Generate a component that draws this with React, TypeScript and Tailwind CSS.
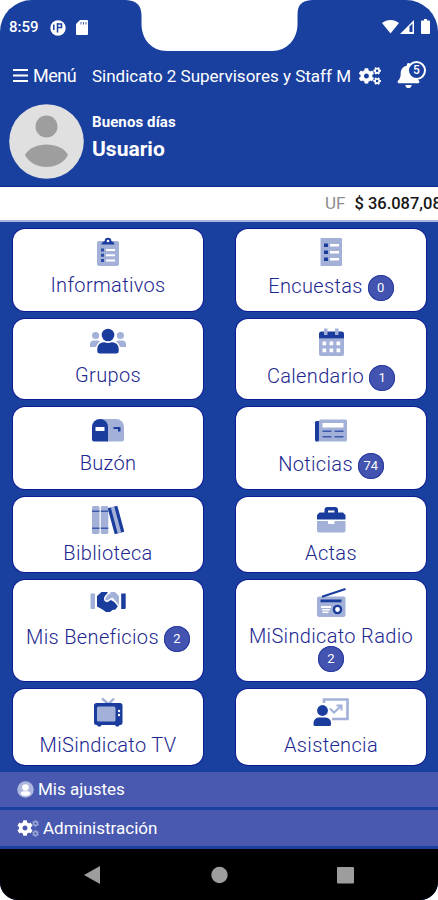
import type { ReactNode } from 'react'
import { FaBell, FaCog, FaCogs } from 'react-icons/fa'

const DARK = '#1a3c9c'
const SOFT = '#a3b1d9'

function ClipboardIcon() {
  return (
    <>
      <path fill={SOFT} d="M9 4h18a2 2 0 0 1 2 2v21a2 2 0 0 1-2 2H9a2 2 0 0 1-2-2V6a2 2 0 0 1 2-2z" />
      <path fill={DARK} d="M11.500 7.500c0-2 1.500-2.500 3.200-3.500a3.300 3.300 0 0 1 6.600 0c1.700 1 3.200 1.500 3.200 3.500z" />
      <circle cx="18" cy="4" r="1.300" fill="#fff" />
      <path fill={DARK} d="M11 11.500h3v3h-3zM11 16.800h3v3h-3zM11 22h3v3h-3z" opacity=".85" />
      <path fill="#fff" d="M16 12h9v2h-9zM16 17.300h9v2h-9zM16 22.500h9v2h-9z" />
    </>
  )
}

function SurveyIcon() {
  return (
    <>
      <rect x="7.500" y="1" width="21.500" height="28" rx="1" fill={SOFT} />
      <path fill={DARK} d="M11 6.500h4v3.500h-4zM11 13.500h4V17h-4zM11 20.500h4V24h-4z" />
      <path fill="#fff" d="M17 7h9v2.500h-9zM17 14h9v2.500h-9zM17 21h9v2.500h-9z" />
    </>
  )
}

function GroupIcon() {
  return (
    <>
      <g fill={SOFT}>
        <circle cx="5.600" cy="8.500" r="3.600" />
        <circle cx="30.400" cy="8.500" r="3.600" />
        <path d="M0 20v-2.500A4 4 0 0 1 4 13.500h3.500c1 0 1.800.3 2.400.9A9 9 0 0 0 6 20zM36 20v-2.500a4 4 0 0 0-4-4h-3.500c-1 0-1.800.3-2.400.9A9 9 0 0 1 30 20z" />
      </g>
      <circle cx="18" cy="8" r="6.300" fill={DARK} />
      <path fill={DARK} d="M7.300 24v-2.300a6.500 6.500 0 0 1 6.500-6.500h.6c2.200 1 5 1 7.200 0h.6a6.500 6.500 0 0 1 6.500 6.500V24a2.500 2.500 0 0 1-2.500 2.500H9.800A2.500 2.500 0 0 1 7.300 24z" />
    </>
  )
}

function CalendarIcon() {
  return (
    <>
      <path fill={SOFT} d="M6 11.500h25V27a2 2 0 0 1-2 2H8a2 2 0 0 1-2-2z" />
      <path fill={DARK} d="M6 11.500V7a2.500 2.500 0 0 1 2.500-2.500h20A2.500 2.500 0 0 1 31 7v4.500z" />
      <path fill={SOFT} d="M11 1.500h3.500V8H11zM22 1.500h3.500V8H22z" />
      <path
        fill="#fff"
        d="M9.500 14.500h3.700v3.700H9.500zM16.500 14.500h3.700v3.700h-3.700zM23.500 14.500h3.700v3.700h-3.700zM9.500 21.500h3.700v3.700H9.500zM16.500 21.500h3.700v3.700h-3.700zM23.500 21.500h3.700v3.700h-3.700z"
      />
    </>
  )
}

function MailboxIcon() {
  return (
    <>
      <path fill={SOFT} d="M10 4h16a8 8 0 0 1 8 8v12.500a2 2 0 0 1-2 2H17z" />
      <path fill={DARK} d="M2 12a8 8 0 0 1 16 0v14.500H4a2 2 0 0 1-2-2z" />
      <path fill="#fff" d="M5.500 12h9v4h-9z" />
      <path fill={DARK} d="M23.500 12h7v4.500H28V14h-4.500z" />
    </>
  )
}

function NewsIcon() {
  return (
    <>
      <path fill={DARK} d="M6 6v20.500H3.500a1.500 1.500 0 0 1-1.500-1.500V7.500A1.500 1.500 0 0 1 3.500 6z" />
      <path fill={SOFT} d="M7.500 4.500h25A1.500 1.500 0 0 1 34 6v19a1.500 1.500 0 0 1-1.500 1.500H4.500A2 2 0 0 0 6 24.500V6a1.500 1.500 0 0 1 1.500-1.500z" />
      <path fill="#fff" d="M9.500 8h21v4.500h-21z" />
      <path fill={DARK} opacity=".75" d="M9.500 15.500h9V17h-9zM21.500 15.500h9V17h-9zM9.500 21h9v1.500h-9zM21.500 21h9v1.500h-9z" />
    </>
  )
}

function BooksIcon() {
  return (
    <>
      <rect x="2" y="1" width="7.500" height="28" rx="1.500" fill={SOFT} />
      <rect x="10.800" y="1" width="7.500" height="28" rx="1.500" fill={SOFT} />
      <path fill={DARK} opacity=".75" d="M2 5.500h7.500V7H2zM10.800 5.500h7.500V7h-7.500zM2 22.500h7.500V24H2zM10.800 22.500h7.500V24h-7.500z" />
      <g transform="rotate(-15 26 15)">
        <rect x="21" y="1.500" width="10" height="27" rx="1" fill={DARK} />
        <rect x="24.200" y="1.500" width="3.600" height="27" fill={SOFT} />
      </g>
    </>
  )
}

function BriefcaseIcon() {
  return (
    <>
      <path fill={SOFT} d="M4 16h11v2a1 1 0 0 0 1 1h4.500a1 1 0 0 0 1-1v-2h11v9.500a2 2 0 0 1-2 2h-24.500a2 2 0 0 1-2-2z" />
      <path
        fill={DARK}
        fillRule="evenodd"
        d="M11.500 7.500V5a3 3 0 0 1 3-3h7.500a3 3 0 0 1 3 3v2.500h5l2.500 2.500v4.500H4V10l2.500-2.500zM15 7.500h6.500v-2H15z"
      />
    </>
  )
}

function HandshakeIcon() {
  return (
    <>
      <path fill={SOFT} d="M.5 5.500H5V21H1.500a1 1 0 0 1-1-1z" />
      <path fill={DARK} d="M31.200 5.500h4.500V20a1 1 0 0 1-1 1h-3.500z" />
      <path fill={DARK} d="M7 8l4.500-4h6v6l8.500 5 2 3-2.500 3.500-3 .5-2.500 2h-4l-3.500-2.500L7 18.500z" />
      <path fill={SOFT} d="M20 4h5l4 4v10.500L22.500 11 17 14.500 14 12l1-4z" />
      <path d="M20.500 4.500c-2 .5-3.500 2-5 4-2 2.500-.5 5 2 4.500s3-2.500 5-2.500l6.500 8" fill="none" stroke="#fff" strokeWidth="1.300" />
    </>
  )
}

function RadioIcon() {
  return (
    <>
      <path fill={SOFT} d="M6 8.500h24.500a2 2 0 0 1 2 2V26.500a2.500 2.500 0 0 1-2.500 2.500H6.500A2.500 2.500 0 0 1 4 26.500v-16a2 2 0 0 1 2-2z" />
      <path d="M9 8.800 32.500 1" stroke={DARK} strokeWidth="2" fill="none" />
      <path fill={DARK} d="M7.500 11.500h21v2.800h-21z" />
      <path fill="#fff" d="M8 18h10v2H8zM9 21h8v1.500H9zM9.500 23.500h6V25h-6z" />
      <circle cx="24.500" cy="21.500" r="3.600" fill="#fff" stroke={DARK} strokeWidth="2.400" />
    </>
  )
}

function TvIcon() {
  return (
    <>
      <path d="M12 1.500 18.500 7 24 1.500" stroke={SOFT} strokeWidth="2.400" fill="none" />
      <path fill={DARK} d="M6.500 6h23.500a2.500 2.500 0 0 1 2.500 2.500v17a2.500 2.500 0 0 1-2.500 2.500h-.5l-1 1.500H26L25 28H11.500l-1 1.500H8L7 28h-.5A2.500 2.500 0 0 1 4 25.500v-17A2.500 2.500 0 0 1 6.500 6z" />
      <rect x="7" y="9.500" width="18.500" height="15" rx="1.500" fill={SOFT} />
      <circle cx="29" cy="14" r="1.200" fill="#fff" />
      <circle cx="29" cy="18" r="1.200" fill="#fff" />
    </>
  )
}

function AttendanceIcon() {
  return (
    <>
      <path d="M11 6V2.500h23.500v19.500H19" stroke={SOFT} strokeWidth="2.600" fill="none" />
      <path d="m17 11.500 4 4 6.500-6M23.500 8.500h5v5" stroke={SOFT} strokeWidth="2" fill="none" />
      <circle cx="9.500" cy="13.500" r="5.400" fill={DARK} />
      <path fill={DARK} d="M6.500 20.500h6a5.500 5.500 0 0 1 5.500 5.500v1.500a1.500 1.500 0 0 1-1.500 1.500h-14.500a1.500 1.500 0 0 1-1.500-1.500V26a5.500 5.500 0 0 1 6-5.500z" />
    </>
  )
}

type Tile = { label: string; icon: ReactNode; count?: number }

const tiles: Tile[] = [
  { label: 'Informativos', icon: <ClipboardIcon /> },
  { label: 'Encuestas', icon: <SurveyIcon />, count: 0 },
  { label: 'Grupos', icon: <GroupIcon /> },
  { label: 'Calendario', icon: <CalendarIcon />, count: 1 },
  { label: 'Buzón', icon: <MailboxIcon /> },
  { label: 'Noticias', icon: <NewsIcon />, count: 74 },
  { label: 'Biblioteca', icon: <BooksIcon /> },
  { label: 'Actas', icon: <BriefcaseIcon /> },
  { label: 'Mis Beneficios', icon: <HandshakeIcon />, count: 2 },
  { label: 'MiSindicato Radio', icon: <RadioIcon />, count: 2 },
  { label: 'MiSindicato TV', icon: <TvIcon /> },
  { label: 'Asistencia', icon: <AttendanceIcon /> },
]

function TileCard({ label, icon, count }: Tile) {
  // long labels push the counter to its own line
  const stacked = count !== undefined && label.length > 14

  return (
    <button className="flex flex-col items-center rounded-xl bg-white pt-2 ring-1 ring-[#0d1c92]">
      <svg width="36" height="30" viewBox="0 0 36 30" className="shrink-0">
        {icon}
      </svg>
      <div
        className={
          stacked
            ? 'mt-[5px] flex flex-col items-center'
            : count !== undefined
              ? 'mt-[6px] flex items-start gap-[5px]'
              : 'mt-[5px] flex'
        }
      >
        <span className="whitespace-nowrap text-[20px] leading-[26px] font-light tracking-[0.34px] text-[#1c2790]">
          {label}
        </span>
        {count !== undefined && (
          <span
            className={`flex size-[26px] items-center justify-center rounded-full bg-[#4353b0] text-[13px] text-white ring-1 ring-[#2a3a9e] ring-inset ${
              stacked ? '-mt-[3px]' : 'mt-[2px]'
            }`}
          >
            {count}
          </span>
        )}
      </div>
    </button>
  )
}

function StatusBar() {
  return (
    <div className="relative flex h-[51px] items-start justify-between pt-[18px] pr-2 pl-[9px]">
      <svg width="186" height="51" viewBox="0 0 186 51" className="absolute top-0 left-[126px]">
        <path fill="#fff" d="M0 0c11 1 15 5 15.500 15v9c0 15 10 27 25.500 27h105c15 0 25.500-12 25.500-27v-9C171.500 5 175 1 186 0z" />
      </svg>
      <div className="flex items-center">
        <span className="w-[41px] text-[15px] leading-[19px] font-medium">8:59</span>
        <svg width="16" height="16" viewBox="0 0 16 16">
          <circle cx="8" cy="8" r="7.700" fill="#fff" />
          <path d="M7.500 3v9.500M3.800 4.500v5.500M8.200 4h3.300v3.500H8.200" fill="none" stroke="#1a409f" strokeWidth="1.500" />
        </svg>
        <svg width="12" height="15" viewBox="0 0 12 15" className="ml-[10px]">
          <path fill="#fff" d="M4 0h7a1 1 0 0 1 1 1v13a1 1 0 0 1-1 1H1a1 1 0 0 1-1-1V4z" />
          <path d="M5 2v2.500M7.500 2v2.500M10 2v2.500" stroke="#1a409f" strokeWidth=".8" />
        </svg>
      </div>
      <div className="flex items-center pt-px">
        <svg width="17" height="14" viewBox="0 0 17 14">
          <path fill="#fff" d="M0 3C5-1 12-1 17 3L8.500 13.500z" />
        </svg>
        <svg width="14" height="14" viewBox="0 0 14 14" className="ml-px">
          <path fill="#fff" d="M14 0v14H0z" />
          <path fill="#1a409f" d="M9.500 6.500 12.500 3.500V12h-3z" />
        </svg>
        <svg width="9" height="15" viewBox="0 0 9 15" className="ml-[7px]">
          <path fill="#fff" d="M3 0h3v1.500h2A1 1 0 0 1 9 2.500V14a1 1 0 0 1-1 1H1a1 1 0 0 1-1-1V2.500a1 1 0 0 1 1-1h2z" />
        </svg>
      </div>
    </div>
  )
}

export default function App() {
  return (
    <div className="h-[900px] w-[438px] bg-white">
      <div
        className="flex h-full flex-col overflow-hidden rounded-t-[32px] rounded-b-[18px] bg-[#1a409f] text-white"
        style={{ fontFamily: 'Roboto, "Liberation Sans", sans-serif' }}
      >
        <StatusBar />

        <header className="flex h-[49px] items-center pl-[13px]">
          <svg width="15" height="15" viewBox="0 0 15 15" className="shrink-0">
            <path d="M0 2h15M0 7.500h15M0 13h15" stroke="#fff" strokeWidth="2" />
          </svg>
          <span className="ml-[5px] w-[59px] text-[18px] tracking-[-0.5px]">Menú</span>
          <span className="w-[267px] pt-[3px] text-[17px] whitespace-nowrap">Sindicato 2 Supervisores y Staff M</span>
          <FaCogs size={22} className="shrink-0" />
          <div className="relative ml-[15px] h-[26px] w-[30px] shrink-0">
            <FaBell size={25} />
            <span className="absolute -top-[2px] left-[11px] flex size-[19px] items-center justify-center rounded-full border-2 border-white bg-[#1a409f] text-[12px] font-medium">
              5
            </span>
          </div>
        </header>

        <section className="flex h-[86px] pt-[3.5px] pl-[9px]">
          <svg width="75" height="75" viewBox="0 0 75 75">
            <circle cx="37.500" cy="37.500" r="37.300" fill="#e0e0e0" />
            <circle cx="37.500" cy="22.500" r="11" fill="#9e9e9e" />
            <path fill="#9e9e9e" d="M16 51c7-14 36-14 43 0-8 16-35 16-43 0z" />
          </svg>
          <div className="ml-2 pt-[8px]">
            <p className="text-[15px] leading-[20px] font-bold tracking-[0.1px]">Buenos días</p>
            <p className="pt-[3px] text-[21px] leading-[28px] font-bold">Usuario</p>
          </div>
        </section>

        <div className="flex h-[36px] shrink-0 items-center overflow-hidden border-t border-b-2 border-t-[#0f2b91] border-b-[#a9b6dc] bg-white pt-px pl-[325px] text-[17px] whitespace-nowrap">
          <span className="text-[#8e8e8e]">UF</span>
          <span className="ml-[9px] text-[16.5px] font-medium text-[#161616]">$ 36.087,08</span>
        </div>

        <main className="grid grid-cols-[190px_190px] grid-rows-[82px_80px_82px_75px_101px_76px] gap-x-[33px] gap-y-2 px-[13px] pt-[7px]">
          {tiles.map((tile) => (
            <TileCard key={tile.label} {...tile} />
          ))}
        </main>

        <nav className="mt-[7px] flex flex-col gap-[3px] text-[17px]">
          <a className="flex h-[35px] items-center bg-[#4959af] pl-[17px]">
            <svg width="17" height="17" viewBox="0 0 17 17">
              <circle cx="8.500" cy="8.500" r="8.300" fill="#aeb7de" />
              <circle cx="8.500" cy="6.500" r="3.300" fill="#fff" />
              <path fill="#fff" d="M3.500 13c.5-2 1.500-2.700 3-2.700h4c1.500 0 2.500.7 3 2.700-2.500 2.500-7.500 2.500-10 0z" />
            </svg>
            <span className="ml-1 pt-px">Mis ajustes</span>
          </a>
          <a className="flex h-[36px] items-center bg-[#4959af] pl-[17px]">
            <FaCog size={16} />
            <span className="-ml-px flex flex-col gap-[3px] text-[#98a3d5]">
              <FaCog size={7} />
              <FaCog size={7} />
            </span>
            <span className="ml-[4px] pt-px">Administración</span>
          </a>
        </nav>

        <footer className="mt-auto flex h-[51px] items-center bg-black pl-[84px]">
          <svg width="272" height="20" viewBox="0 0 272 20" fill="#9d9d9d">
            <path d="M0 10 16 1v18z" />
            <circle cx="135.500" cy="10" r="8.200" />
            <rect x="253" y="2" width="17" height="16.500" rx="1" />
          </svg>
        </footer>
      </div>
    </div>
  )
}
